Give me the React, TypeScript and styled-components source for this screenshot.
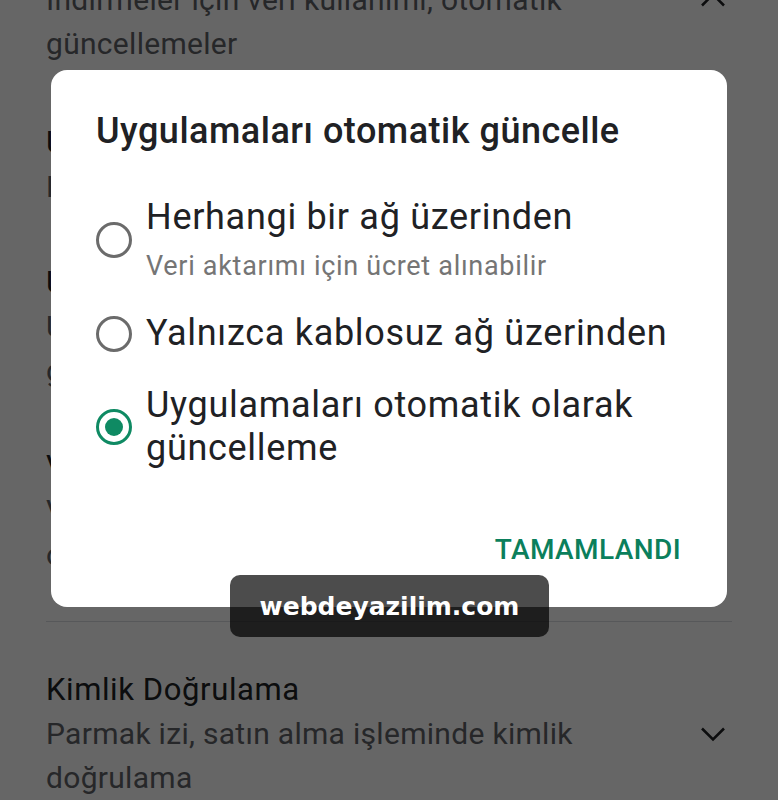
import styled, { createGlobalStyle } from 'styled-components'

const GlobalStyle = createGlobalStyle`
  html, body {
    margin: 0;
    padding: 0;
    background: #ffffff;
    font-family: Roboto, "Noto Sans", sans-serif;
    overflow: hidden;
  }
`

const Page = styled.div`
  position: relative;
  width: 778px;
  height: 800px;
  overflow: hidden;
  background: #ffffff;
`

const List = styled.div`
  display: flex;
  flex-direction: column;
  margin-top: -22px;
  padding: 0 46px;
`

const Section = styled.section<{ $bottom: number }>`
  display: flex;
  flex-direction: column;
  padding-bottom: ${(p) => p.$bottom}px;
  border-bottom: 1.5px solid #dadce0;
`

const Row = styled.div<{ $top: number; $bottom: number; $align?: string }>`
  display: flex;
  align-items: ${(p) => p.$align ?? 'center'};
  gap: 24px;
  padding: ${(p) => p.$top}px 0 ${(p) => p.$bottom}px;
`

const RowText = styled.div`
  flex: 1;
  display: flex;
  flex-direction: column;
  white-space: nowrap;
`

const RowTitle = styled.div`
  font-size: 31px;
  line-height: 44px;
  letter-spacing: 0.6px;
  color: #202124;
`

const RowSub = styled.div`
  font-size: 30px;
  line-height: 44px;
  letter-spacing: 0.3px;
  color: #5f6368;
`

const Chevron = styled.svg`
  width: 44px;
  height: 44px;
  flex: none;
  margin-right: -3px;
`

const Scrim = styled.div`
  position: absolute;
  inset: 0;
  background: rgba(0, 0, 0, 0.6);
  display: flex;
  justify-content: center;
  align-items: flex-start;
  padding-top: 70px;
`

const Dialog = styled.div`
  width: 676px;
  height: 537px;
  box-sizing: border-box;
  background: #ffffff;
  border-radius: 16px;
  padding: 41px 46px 0 45px;
  display: flex;
  flex-direction: column;
`

const DialogTitle = styled.h2`
  margin: 0;
  font-size: 36px;
  line-height: 40px;
  font-weight: 500;
  letter-spacing: 0.5px;
  color: #202124;
  white-space: nowrap;
`

const Options = styled.div`
  display: flex;
  flex-direction: column;
  gap: 29px;
  margin-top: 45px;
`

const Option = styled.label`
  display: flex;
  align-items: center;
  gap: 14px;
  cursor: pointer;
`

const Radio = styled.span<{ $checked?: boolean }>`
  flex: none;
  width: 36px;
  height: 36px;
  box-sizing: border-box;
  border-radius: 50%;
  border: 3px solid ${(p) => (p.$checked ? '#0f8a63' : '#6b6b6b')};
  display: flex;
  align-items: center;
  justify-content: center;

  &::after {
    content: '';
    width: 18px;
    height: 18px;
    border-radius: 50%;
    background: #0f8a63;
    display: ${(p) => (p.$checked ? 'block' : 'none')};
  }
`

const OptionText = styled.div`
  display: flex;
  flex-direction: column;
`

const OptionLabel = styled.span`
  font-size: 36px;
  line-height: 43px;
  letter-spacing: 0.7px;
  color: #202124;
`

const OptionHint = styled.span`
  font-size: 27px;
  line-height: 34px;
  letter-spacing: 0.7px;
  margin-top: 10px;
  color: #757575;
`

const Actions = styled.div`
  display: flex;
  justify-content: flex-end;
  margin-top: auto;
  padding-bottom: 39px;
`

const TextButton = styled.button`
  border: none;
  background: none;
  padding: 0;
  font-family: Roboto, "Noto Sans", sans-serif;
  font-size: 28px;
  line-height: 36px;
  font-weight: 500;
  letter-spacing: 0.4px;
  color: #0b7f5c;
  cursor: pointer;
`

const Watermark = styled.div`
  position: absolute;
  left: 230px;
  top: 575px;
  width: 319px;
  height: 62px;
  border-radius: 10px;
  background: rgba(0, 0, 0, 0.7);
  display: flex;
  align-items: center;
  justify-content: center;
  font-family: "DejaVu Sans", sans-serif;
  font-weight: bold;
  font-size: 25px;
  color: #ffffff;
`

const options = [
  { label: 'Herhangi bir ağ üzerinden', hint: 'Veri aktarımı için ücret alınabilir' },
  { label: 'Yalnızca kablosuz ağ üzerinden' },
  { label: 'Uygulamaları otomatik olarak güncelleme', checked: true },
]

function ChevronIcon({ up }: { up?: boolean }) {
  return (
    <Chevron viewBox="0 0 24 24" fill="none" stroke="#202124" strokeWidth="1.4">
      <path d={up ? 'M6 15l6-6 6 6' : 'M6 9l6 6 6-6'} />
    </Chevron>
  )
}

export default function App() {
  return (
    <Page>
      <GlobalStyle />
      <List>
        <Section $bottom={44}>
          <Row $top={0} $bottom={29} $align="flex-start">
            <RowText>
              <RowSub>İndirmeler için veri kullanımı, otomatik</RowSub>
              <RowSub>güncellemeler</RowSub>
            </RowText>
            <ChevronIcon up />
          </Row>
          <Row $top={26} $bottom={26}>
            <RowText>
              <RowTitle>Uygulama indirme tercihi</RowTitle>
              <RowSub>Herhangi bir ağ üzerinden</RowSub>
            </RowText>
          </Row>
          <Row $top={26} $bottom={26}>
            <RowText>
              <RowTitle>Uygulamaları otomatik güncelle</RowTitle>
              <RowSub>Uygulamaları otomatik olarak</RowSub>
              <RowSub>güncelleme</RowSub>
            </RowText>
          </Row>
          <Row $top={26} $bottom={0}>
            <RowText>
              <RowTitle>Videoları otomatik oynat</RowTitle>
              <RowSub>Videoları yalnızca kablosuz ağ üzerinden</RowSub>
              <RowSub>otomatik oynat</RowSub>
            </RowText>
          </Row>
        </Section>
        <Row $top={46} $bottom={20}>
          <RowText>
            <RowTitle>Kimlik Doğrulama</RowTitle>
            <RowSub>Parmak izi, satın alma işleminde kimlik</RowSub>
            <RowSub>doğrulama</RowSub>
          </RowText>
          <ChevronIcon />
        </Row>
      </List>

      <Scrim>
        <Dialog>
          <DialogTitle>Uygulamaları otomatik güncelle</DialogTitle>
          <Options>
            {options.map((o) => (
              <Option key={o.label}>
                <Radio $checked={o.checked} />
                <OptionText>
                  <OptionLabel>{o.label}</OptionLabel>
                  {o.hint && <OptionHint>{o.hint}</OptionHint>}
                </OptionText>
              </Option>
            ))}
          </Options>
          <Actions>
            <TextButton>TAMAMLANDI</TextButton>
          </Actions>
        </Dialog>
      </Scrim>

      <Watermark>webdeyazilim.com</Watermark>
    </Page>
  )
}
